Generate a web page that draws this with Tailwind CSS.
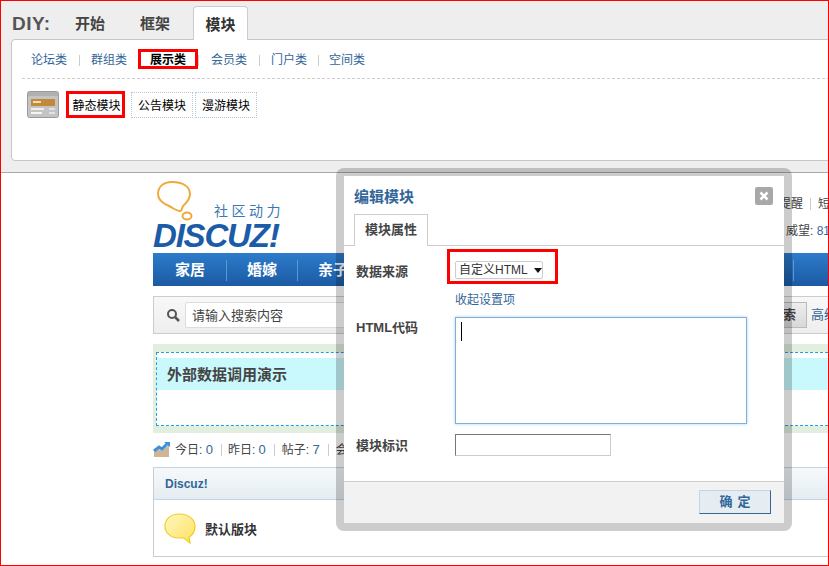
<!DOCTYPE html>
<html lang="zh">
<head>
    <meta charset="UTF-8">
    <title>DIY</title>
    <script src="https://cdn.jsdelivr.net/npm/@tailwindcss/browser@4"></script>
</head>
<body class="bg-white">
<div class="relative w-[829px] h-[566px] overflow-hidden border border-[#f00] font-['Liberation_Sans','Noto_Sans_CJK_SC',sans-serif] text-xs text-[#444]">

    <!-- diy panel -->
    <div class="h-[173px] bg-[#eeeeee] border-b border-[#aaaaaa] pl-[10px] -mt-px">
        <div class="flex h-[39px] items-end pt-[6px]">
            <div class="w-[63px] pl-px self-start mt-[9px] text-[19px] tracking-[0.5px] font-bold text-[#555] leading-[18px]">DIY:</div>
            <div class="w-[66px] h-[33px] leading-[36px] text-[15px] font-bold text-[#444] pl-px">开始</div>
            <div class="w-[53px] h-[33px] leading-[36px] text-[15px] font-bold text-[#444]">框架</div>
            <div class="relative z-10 w-[55px] h-[34px] -mb-px leading-[36px] text-[15px] font-bold text-[#333] text-center bg-white border border-b-0 border-[#cccccc] rounded-t-[4px]">模块</div>
        </div>
        <div class="h-[122px] w-[830px] bg-white border border-[#c8c4cc] rounded-[4px] pt-[9px] pl-[10px]">
            <div class="flex items-center h-[20px] text-[#369]">
                <span class="w-[36px] ml-[9px] pt-[2px]">论坛类</span>
                <span class="w-px h-[11px] bg-[#cccccc] ml-[12px] mt-[2px]"></span>
                <span class="w-[36px] ml-[11px] pt-[2px]">群组类</span>
                <span class="flex items-center justify-center w-[60px] h-[20px] ml-[11px] pt-[2px] border-[3px] border-[#f00] font-bold text-black">展示类</span>
                <span class="w-px h-[11px] bg-[#cccccc] mt-[2px]"></span>
                <span class="w-[36px] ml-[12px] pt-[2px]">会员类</span>
                <span class="w-px h-[11px] bg-[#cccccc] ml-[12px] mt-[2px]"></span>
                <span class="w-[36px] ml-[11px] pt-[2px]">门户类</span>
                <span class="w-px h-[11px] bg-[#cccccc] ml-[11px] mt-[2px]"></span>
                <span class="w-[36px] ml-[10px] pt-[2px]">空间类</span>
            </div>
            <div class="border-t border-dashed border-[#cccccc] mt-[9px]"></div>
            <div class="flex items-start mt-[12px] ml-[5px] text-black">
                <svg width="32" height="27" viewBox="0 0 32 27">
                    <rect x="0.5" y="0.5" width="31" height="26" rx="2" fill="#c4c4c4" stroke="#9a9a9a"/>
                    <rect x="1" y="1" width="30" height="4" fill="#b0b0b0"/>
                    <rect x="4" y="8" width="24" height="7" fill="#c08a3a"/>
                    <rect x="6" y="10" width="8" height="2" fill="#f0dcb8"/>
                    <rect x="4" y="17" width="13" height="2" fill="#eeeeee"/>
                    <rect x="22" y="17" width="6" height="2" fill="#e2e2e2"/>
                    <rect x="4" y="21" width="11" height="2" fill="#f4f4f4"/>
                    <rect x="22" y="21" width="6" height="2" fill="#e2e2e2"/>
                </svg>
                <div class="flex items-center justify-center w-[59px] h-[27px] ml-[7px] pl-[2px] pt-[2px] border-[3px] border-[#f00]">静态模块</div>
                <div class="flex items-center justify-center w-[62px] h-[26px] ml-[6px] mt-px pt-[2px] border border-dotted border-[#b5c8dc]">公告模块</div>
                <div class="flex items-center justify-center w-[62px] h-[26px] ml-[2px] mt-px pt-[2px] border border-dotted border-[#b5c8dc]">漫游模块</div>
            </div>
        </div>
    </div>

    <!-- page -->
    <div class="w-[700px] ml-[152px]">
        <div class="flex justify-between h-[80px]">
            <div class="relative w-[134px] h-[72px] mt-[8px]">
                <svg class="absolute left-[1px] top-0" width="40" height="42" viewBox="0 0 40 42">
                    <path d="M18 1C9 1 4 6 4 13c0 7 6 10 11 12 4 2 7 5 11 5 2 0 2-3 3-5 3-3 7-6 7-12C36 5 28 1 18 1z" fill="#fff" stroke="#efa93a" stroke-width="2"/>
                    <ellipse cx="33" cy="35" rx="4.5" ry="3.5" fill="#fff" stroke="#efa93a" stroke-width="2"/>
                </svg>
                <div class="absolute left-[61px] top-[20px] text-[14px] leading-5 tracking-[3.5px] text-[#3a78b5] whitespace-nowrap">社区动力</div>
                <div class="absolute left-[0px] top-[36px] text-[33px] leading-[36px] font-bold italic tracking-[-1.2px] text-[#1a5ca8] whitespace-nowrap font-['Liberation_Sans',sans-serif]">DISCUZ<span class="text-[34px]">!</span></div>
            </div>
            <div class="w-[70px] mr-[24px] pt-[22px] text-[#444] whitespace-nowrap">
                <div class="flex items-center h-[18px] ml-[20px]"><span class="shrink-0">提醒</span><span class="shrink-0 w-px h-3 bg-[#cccccc] mx-[7px]"></span><span class="shrink-0">短消息</span></div>
                <div class="mt-[10px] h-[18px] ml-[27px]">威望: <span class="text-[#369]">81</span></div>
            </div>
        </div>
        <nav class="flex items-center h-[33px] pt-px bg-gradient-to-b from-[#2d7ccb] to-[#1c5aa3] text-[15px] font-bold text-white">
            <span class="w-[73px] text-center pl-[1px]">家居</span>
            <span class="w-px h-[21px] bg-[#5c97d4]"></span>
            <span class="w-[70px] text-center">婚嫁</span>
            <span class="w-px h-[21px] bg-[#5c97d4]"></span>
            <span class="w-[70px] text-center">亲子</span>
            <span class="w-px h-[21px] bg-[#5c97d4] ml-[425px]"></span>
        </nav>
        <div class="flex items-center h-[38px] mt-[10px] bg-gradient-to-b from-[#f8f8f8] to-[#eeeeee] border border-[#cccccc]">
            <svg class="ml-[12px]" width="14" height="14" viewBox="0 0 14 14" fill="none">
                <circle cx="6" cy="6" r="4" stroke="#555" stroke-width="2"/>
                <path d="M9 9l4 4" stroke="#555" stroke-width="2.5"/>
            </svg>
            <div class="flex items-center w-[570px] h-[26px] ml-[5px] pl-[6px] pt-px bg-white border border-[#dddddd] rounded-[2px] text-[13px] text-[#444]">请输入搜索内容</div>
            <div class="flex items-center justify-center w-[48px] h-[26px] ml-[4px] bg-gradient-to-b from-[#eeeeee] to-[#d8d8d8] border border-[#bbbbbb] text-[13px] font-bold">搜索</div>
            <span class="ml-[4px] text-[13px] text-[#369] whitespace-nowrap">高级</span>
        </div>
        <div class="h-[89px] mt-[10px] pt-[8px] pl-[3px] bg-[#e0efe0]">
            <div class="h-[74px] pt-[5px] bg-white border border-dashed border-[#1e9fe8]">
                <div class="h-[32px] leading-[34px] pl-[10px] bg-[#c9f8fd] text-[15px] font-bold text-[#444]">外部数据调用演示</div>
            </div>
        </div>
        <div class="flex items-center h-[34px] text-[#444]">
            <svg class="mr-[5px] -mt-[2px]" width="17" height="15" viewBox="0 0 17 15">
                <path d="M1 15V10l5-3 3 2 7-6v12z" fill="#cdb596"/>
                <path d="M1 9l5-4 3 2 5-5" fill="none" stroke="#3f8fd8" stroke-width="3"/>
                <path d="M11 0h6v5z" fill="#3f8fd8"/>
            </svg>
            <span>今日: <span class="text-[13px] text-[#369]">0</span></span>
            <span class="w-px h-3 bg-[#cccccc] ml-[8px] mr-[6px]"></span>
            <span>昨日: <span class="text-[13px] text-[#369]">0</span></span>
            <span class="w-px h-3 bg-[#cccccc] ml-[8px] mr-[7px]"></span>
            <span>帖子: <span class="text-[13px] text-[#369]">7</span></span>
            <span class="w-px h-3 bg-[#cccccc] ml-[8px] mr-[7px]"></span>
            <span>会员: <span class="text-[13px] text-[#369]">2</span></span>
        </div>
        <div class="h-[90px] border border-[#cccccc] border-t-[#c2d5e3]">
            <div class="h-[32px] leading-[33px] pl-[11px] bg-gradient-to-b from-[#f6f9fb] to-[#e5edf2] border-b border-[#c2d5e3] font-bold text-[#336699]">Discuz!</div>
            <div class="flex items-center h-[57px] pl-[10px]">
                <svg width="32" height="31" viewBox="0 0 32 31">
                    <defs>
                        <linearGradient id="bubble" x1="0" y1="0" x2="1" y2="1">
                            <stop offset="0" stop-color="#fff8c0"/>
                            <stop offset="1" stop-color="#ffe060"/>
                        </linearGradient>
                    </defs>
                    <path d="M15 1C7 1 1 6 1 13s6 12 14 12c2 0 4 0 5 0l6 5c0-2-1-4-1-6 4-2 6-6 6-11C31 6 24 1 15 1z" fill="url(#bubble)" stroke="#f2cd1e" stroke-width="1.2"/>
                </svg>
                <span class="ml-[9px] pt-[2px] text-[13px] font-bold text-[#333]">默认版块</span>
            </div>
        </div>
    </div>

    <!-- edit dialog -->
    <div class="absolute left-[335px] top-[167px] w-[456px] h-[363px] border-[8px] border-black/20 rounded-[8px] bg-white bg-clip-padding">
        <div class="flex flex-col h-full">
            <div class="relative h-[38px] pl-[10px] pt-[11px] text-[15px] leading-5 font-bold text-[#336699]">
                编辑模块
                <span class="absolute left-[411px] top-[11px] flex items-center justify-center w-[18px] h-[18px] bg-[#a8a8a8] rounded-[2px]">
                    <svg width="10" height="10" viewBox="0 0 10 10"><path d="M1.5 1.5l7 7M8.5 1.5l-7 7" stroke="#fff" stroke-width="2.5"/></svg>
                </span>
            </div>
            <div class="h-[32px] border-b border-[#cccccc] pl-[10px]">
                <div class="w-[74px] h-[32px] leading-[30px] text-center text-[13px] font-bold text-[#444] bg-white border border-b-0 border-[#cccccc]">模块属性</div>
            </div>
            <div class="relative flex-1">
                <div class="flex items-end h-[35px] mt-[3px]">
                    <span class="w-[103px] pl-[12px] pb-[4px] text-[13px] font-bold">数据来源</span>
                    <div class="flex items-end w-[111px] h-[35px] border-[3px] border-[#f00] pl-[5px] pb-[2px]">
                        <div class="flex items-center w-[88px] h-[18px] pl-[3px] border border-[#cccccc] rounded-[2px] text-[#333] whitespace-nowrap">
                            自定义HTML
                            <svg class="ml-[6px]" width="8" height="5" viewBox="0 0 8 5"><path d="M0 0h8L4 5z" fill="#111"/></svg>
                        </div>
                    </div>
                </div>
                <div class="h-[18px] mt-[7px] ml-[111px] text-[#336699] leading-[18px]">收起设置项</div>
                <div class="flex mt-[8px]">
                    <span class="w-[111px] pl-[12px] pt-[2px] text-[13px] font-bold">HTML代码</span>
                    <div class="w-[292px] h-[107px] pl-[5px] pt-[4px] border border-[#7fb0d8] shadow-[0_0_3px_#a8d0f0]">
                        <div class="w-px h-[19px] bg-black"></div>
                    </div>
                </div>
                <div class="flex items-center mt-[10px]">
                    <span class="w-[111px] pl-[12px] pt-px text-[13px] font-bold">模块标识</span>
                    <div class="w-[156px] h-[22px] border border-[#cccccc] border-t-[#777777] border-l-[#777777]"></div>
                </div>
            </div>
            <div class="flex justify-end h-[42px] pt-[8px] pr-[13px] bg-[#f2f2f2] border-t border-[#cccccc]">
                <div class="flex items-center justify-center w-[72px] h-[24px] bg-[#e5edf2] border border-[#c2d5e3] border-r-[#336699] border-b-[#336699] text-[13px] font-bold text-[#336699] tracking-[5px] pl-[5px]">确定</div>
            </div>
        </div>
    </div>
</div>
</body>
</html>
